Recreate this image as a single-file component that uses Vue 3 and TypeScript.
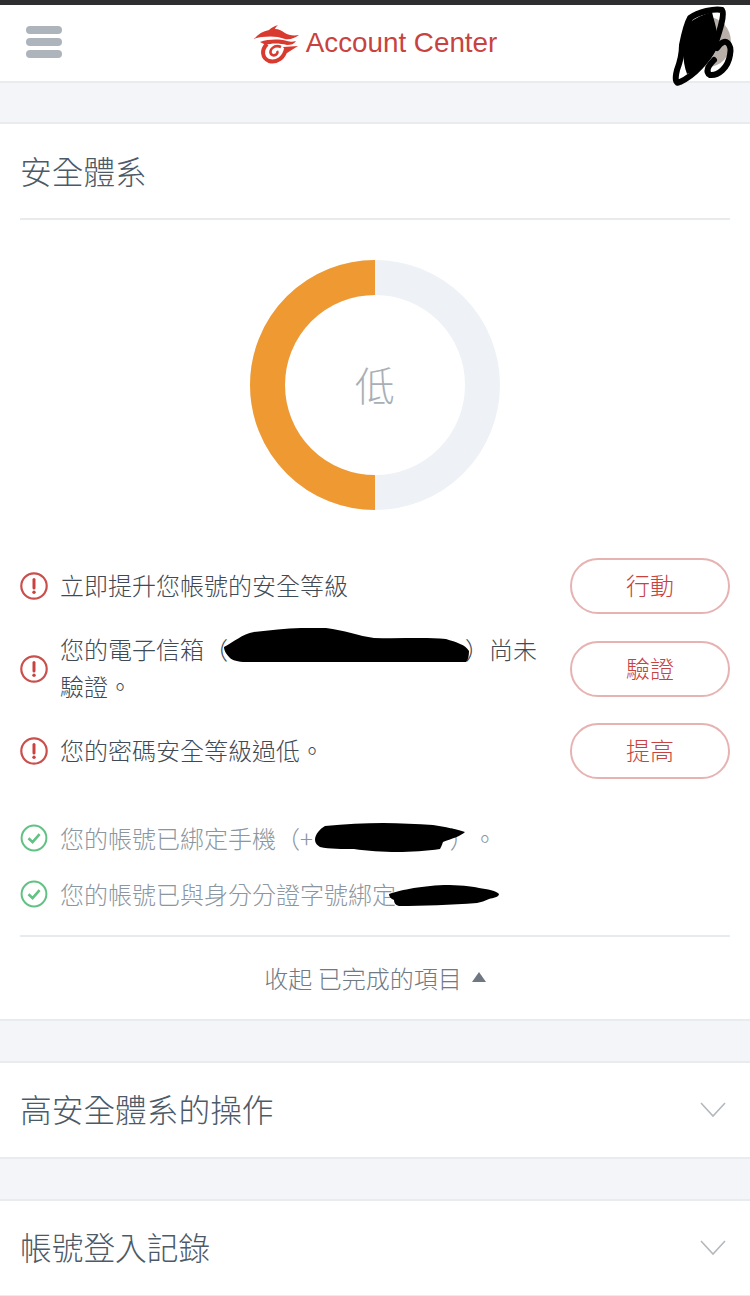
<template>
  <div class="page">
    <div class="status-bar"></div>
    <header class="top-nav">
      <div class="burger">
        <span></span>
        <span></span>
        <span></span>
      </div>
      <div class="brand">
        <svg class="brand-mark" viewBox="0 0 56 44" width="56" height="44">
          <path fill="#d93a2f" d="M5 18 C9 13 14 10 20 9 C22 7 25 5 29 4 C27 6 26 7 26 8 C30 8 33 10 36 12 C39 14 44 15 50 14 C46 17 41 19 36 18 C29 15 20 15 13 16 C10 16 7 17 5 18 Z" />
          <path fill="#d93a2f" d="M11 21 C20 18 30 18 38 20 C41 21 44 21 47 20 C45 23 42 24 38 24 C30 22 22 22 17 24 Z" />
          <path fill="none" stroke="#d93a2f" stroke-width="4" d="M18 23 C12 29 13 37 20 40 C28 42 35 37 37 28" />
          <path fill="#d93a2f" d="M34 26 L49 25 L38 32 Z" />
          <path fill="none" stroke="#d93a2f" stroke-width="2.6" d="M32 26 C25 23 20 29 22 33 C25 36 30 33 28 30" />
        </svg>
        <span class="brand-name">Account Center</span>
      </div>
      <div class="avatar">
        <svg viewBox="0 0 90 95" width="90" height="95">
          <ellipse cx="48" cy="42" rx="23" ry="25" fill="#b8b0a8" />
          <path class="scribble" d="M30 18 C38 12 55 8 62 10 C65 14 60 30 55 45 C48 60 35 75 20 82 C15 85 15 78 17 70 C20 62 22 55 22 45 C24 35 26 25 30 18 Z" />
          <path class="scribble" d="M57 48 C66 35 72 45 70 55 C68 68 58 76 50 75 C45 72 48 66 54 60" />
          <path fill="#000" d="M27 24 C35 18 44 14 52 12 C54 22 60 34 56 50 C50 62 40 70 27 74 C22 62 22 40 27 24 Z" />
        </svg>
      </div>
    </header>

    <section class="card security">
      <h2 class="card-title">安全體系</h2>
      <div class="donut-wrap">
        <svg class="donut" viewBox="0 0 250 250" width="250" height="250">
          <circle cx="125" cy="125" r="107.5" class="donut-track" />
          <path d="M125 17.5 A107.5 107.5 0 0 0 125 232.5" class="donut-value" />
        </svg>
        <span class="donut-label">低</span>
      </div>

      <ul class="todo-list">
        <li v-for="item in todos" :key="item.action" class="todo-row">
          <svg class="state-icon" viewBox="0 0 28 28" width="28" height="28">
            <circle cx="14" cy="14" r="12.7" fill="none" stroke="#c9504d" stroke-width="2.2" />
            <path d="M14 7.5 V16" stroke="#c8423f" stroke-width="3" stroke-linecap="round" />
            <circle cx="14" cy="20.2" r="1.7" fill="#c8423f" />
          </svg>
          <p class="todo-text">
            {{ item.before }}<span v-if="item.masked" class="mask mask-email"><svg viewBox="0 0 245 34" width="245" height="34"><path d="M0 19 C10 14 18 6 30 4 C55 1 80 -1 102 0 C120 2 135 8 150 10 C175 11 200 9 222 11 C232 14 242 17 245 23 C245 28 244 32 242 34 C170 35 90 35 22 34 C14 34 8 32 6 30 C3 27 0 23 0 19 Z" /></svg></span>{{ item.after }}
          </p>
          <button class="outline-btn" type="button">{{ item.action }}</button>
        </li>
      </ul>

      <ul class="done-list">
        <li class="done-row">
          <svg class="state-icon" viewBox="0 0 28 28" width="28" height="28">
            <circle cx="14" cy="14" r="12.4" fill="none" stroke="#62c184" stroke-width="2" />
            <path d="M8.5 14.2 L12.6 18.2 L19.6 10.2" fill="none" stroke="#62c184" stroke-width="2.6" />
          </svg>
          <p class="done-text">您的帳號已綁定手機（+<span class="mask mask-phone"><svg viewBox="0 0 150 29" width="150" height="29"><path d="M0 17 C0 11 5 6 10 3 C30 1 50 0 68 0 C85 0 102 1 118 2 C130 4 142 6 150 9 C146 13 136 16 128 19 C127 22 126 24 125 26 C112 28 96 29 82 29 C68 29 52 28 39 26 C28 26 14 26 5 24 C2 22 0 20 0 17 Z" /></svg></span>）<span class="period">。</span></p>
        </li>
        <li class="done-row">
          <svg class="state-icon" viewBox="0 0 28 28" width="28" height="28">
            <circle cx="14" cy="14" r="12.4" fill="none" stroke="#62c184" stroke-width="2" />
            <path d="M8.5 14.2 L12.6 18.2 L19.6 10.2" fill="none" stroke="#62c184" stroke-width="2.6" />
          </svg>
          <p class="done-text">您的帳號已與身分分證字號綁定<span class="mask mask-id"><svg viewBox="0 0 110 21" width="110" height="21"><path d="M0 9 C8 6 30 1 55 0 C70 0 82 1 90 3 C98 4 108 6 110 9 C110 12 104 13 100 14 C96 16 92 17 88 18 C62 20 34 21 10 21 C6 20 5 17 5 15 C2 14 0 12 0 9 Z" /></svg></span></p>
        </li>
      </ul>

      <div class="collapse-row">
        <span>收起 已完成的項目</span>
        <i class="caret"></i>
      </div>
    </section>

    <section v-for="panel in panels" :key="panel" class="card panel">
      <h2 class="panel-title">{{ panel }}</h2>
      <svg class="chevron" viewBox="0 0 26 16" width="26" height="16">
        <path d="M1 1 L13 14 L25 1" fill="none" stroke="#b4b8bd" stroke-width="1.6" />
      </svg>
    </section>
  </div>
</template>

<script setup lang="ts">
interface TodoItem {
  before: string;
  masked?: boolean;
  after?: string;
  action: string;
}

const todos: TodoItem[] = [
  { before: "立即提升您帳號的安全等級", action: "行動" },
  { before: "您的電子信箱（", masked: true, after: "）尚未驗證。", action: "驗證" },
  { before: "您的密碼安全等級過低。", action: "提高" },
];

const panels = ["高安全體系的操作", "帳號登入記錄"];
</script>

<style>
html,
body {
  margin: 0;
  background: #f3f5f8;
}
</style>

<style scoped>
.page {
  width: 750px;
  height: 1296px;
  overflow: hidden;
  background: #f3f5f8;
  font-family: "Noto Sans CJK TC", "Liberation Sans", sans-serif;
  font-weight: 300;
  color: #4d5761;
}

.status-bar {
  height: 5px;
  background: #2e2e30;
}

.top-nav {
  position: relative;
  height: 76px;
  display: flex;
  align-items: center;
  justify-content: center;
  background: #fff;
  border-bottom: 2px solid #e8ecef;
}

.burger {
  position: absolute;
  left: 26px;
  top: 21px;
  display: flex;
  flex-direction: column;
  gap: 4px;
}

.burger span {
  width: 36px;
  height: 8px;
  border-radius: 4px;
  background: #aeb4bb;
}

.brand {
  display: flex;
  align-items: center;
  gap: 1px;
  margin-left: -4px;
}

.brand-name {
  font-family: "Liberation Sans", Arial, sans-serif;
  font-weight: 400;
  font-size: 27.8px;
  color: #c8433f;
}

.avatar {
  position: absolute;
  top: -5px;
  right: 0;
}

.scribble {
  fill: none;
  stroke: #000;
  stroke-width: 6;
  stroke-linecap: round;
}

.card {
  background: #fff;
  border-top: 2px solid #e8ecef;
  border-bottom: 2px solid #e8ecef;
}

.security {
  margin-top: 39px;
  padding: 0 20px;
  height: 899px;
  box-sizing: border-box;
}

.card-title {
  margin: 0;
  height: 94px;
  line-height: 92px;
  font-size: 31.7px;
  font-weight: 300;
  color: #4c5a68;
  border-bottom: 2px solid #e8ebee;
}

.donut-wrap {
  position: relative;
  width: 250px;
  height: 250px;
  margin: 40px auto 0;
}

.donut {
  display: block;
}

.donut-track {
  fill: none;
  stroke: #eef2f6;
  stroke-width: 35;
}

.donut-value {
  fill: none;
  stroke: #ef9933;
  stroke-width: 35;
}

.donut-label {
  position: absolute;
  inset: 0;
  display: flex;
  align-items: center;
  justify-content: center;
  padding-bottom: 3px;
  font-size: 40px;
  color: #a9afb6;
}

.todo-list,
.done-list {
  list-style: none;
  margin: 0;
  padding: 0;
}

.todo-list {
  margin-top: 48px;
  display: flex;
  flex-direction: column;
  gap: 26.5px;
}

.todo-row {
  display: flex;
  align-items: center;
  height: 56px;
}

.state-icon {
  flex: none;
  margin-right: 12px;
}

.todo-text,
.done-text {
  margin: 0;
  font-size: 24px;
  line-height: 37px;
}

.todo-text {
  flex: 1;
  color: #3f4a55;
  padding: 0 24px 3px 0;
}

.outline-btn {
  flex: none;
  width: 160px;
  height: 56px;
  padding: 0 0 3px;
  background: #fff;
  border: 2px solid #e6b3b2;
  border-radius: 28px;
  font-family: inherit;
  font-weight: 300;
  font-size: 24px;
  color: #c8433f;
}

.mask {
  position: relative;
  display: inline-block;
  vertical-align: middle;
  line-height: 0;
}

.mask-email {
  width: 247px;
  margin: -15px -6px 0 -4px;
}

.mask-phone {
  width: 148px;
  margin: -8px -13px 0 2px;
}

.mask-id {
  width: 104px;
  margin: -3px 0 0 -7px;
}

.period {
  margin-left: 11px;
}

.done-list {
  margin-top: 40px;
  display: flex;
  flex-direction: column;
  gap: 19px;
}

.done-row {
  display: flex;
  align-items: center;
}

.done-text {
  color: #8b96a0;
  white-space: nowrap;
}

.collapse-row {
  margin-top: 23px;
  height: 80px;
  padding-bottom: 2px;
  border-top: 2px solid #e8ebee;
  display: flex;
  align-items: center;
  justify-content: center;
  gap: 10px;
  font-size: 24px;
  color: #6f7a85;
}

.caret {
  width: 0;
  height: 0;
  border-left: 7px solid transparent;
  border-right: 7px solid transparent;
  border-bottom: 10px solid #6f7882;
}

.panel {
  margin-top: 40px;
  height: 98px;
  box-sizing: border-box;
  display: flex;
  align-items: center;
  justify-content: space-between;
  padding: 0 24px 0 20px;
}

.panel-title {
  margin: 0 0 4px;
  font-size: 31.7px;
  font-weight: 300;
  color: #4c5a68;
}
</style>
